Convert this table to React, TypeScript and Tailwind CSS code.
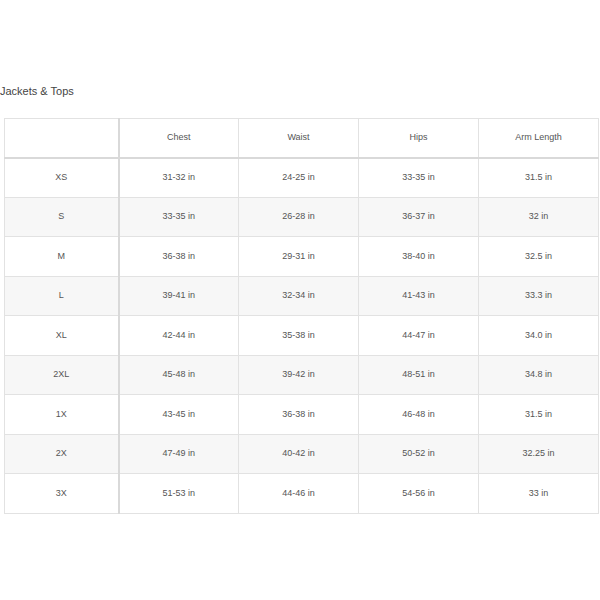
const headers = ['', 'Chest', 'Waist', 'Hips', 'Arm Length'];

const rows = [
  ['XS', '31-32 in', '24-25 in', '33-35 in', '31.5 in'],
  ['S', '33-35 in', '26-28 in', '36-37 in', '32 in'],
  ['M', '36-38 in', '29-31 in', '38-40 in', '32.5 in'],
  ['L', '39-41 in', '32-34 in', '41-43 in', '33.3 in'],
  ['XL', '42-44 in', '35-38 in', '44-47 in', '34.0 in'],
  ['2XL', '45-48 in', '39-42 in', '48-51 in', '34.8 in'],
  ['1X', '43-45 in', '36-38 in', '46-48 in', '31.5 in'],
  ['2X', '47-49 in', '40-42 in', '50-52 in', '32.25 in'],
  ['3X', '51-53 in', '44-46 in', '54-56 in', '33 in'],
];

export default function App() {
  return (
    <div className="h-[600px] w-[600px] bg-white font-['Liberation_Sans',Arial,sans-serif] text-[#555]">
      <div className="pt-[84px] text-[11px] leading-[14px] text-[#444]">Jackets &amp; Tops</div>
      <div className="mt-[20px] pl-[4px] pr-[2px]">
        <table className="w-[594px] table-fixed border-collapse text-center text-[9px]">
          <colgroup>
            <col className="w-[114px]" />
            <col className="w-[120px]" />
            <col className="w-[120px]" />
            <col className="w-[120px]" />
            <col className="w-[120px]" />
          </colgroup>
          <thead>
            <tr className="h-[39px]">
              {headers.map((h, i) => (
                <th
                  key={i}
                  className={`border border-[#e2e2e2] border-b-2 border-b-[#d9d9d9] font-normal ${
                    i === 0 ? 'border-r-2 border-r-[#d9d9d9]' : ''
                  }`}
                >
                  {h}
                </th>
              ))}
            </tr>
          </thead>
          <tbody>
            {rows.map((r, ri) => (
              <tr key={ri} className={`h-[39.5px] ${ri % 2 === 1 ? 'bg-[#f7f7f7]' : 'bg-white'}`}>
                {r.map((c, ci) => (
                  <td
                    key={ci}
                    className={`border border-[#e2e2e2] ${ci === 0 ? 'border-r-2 border-r-[#d9d9d9]' : ''}`}
                  >
                    {c}
                  </td>
                ))}
              </tr>
            ))}
          </tbody>
        </table>
      </div>
    </div>
  );
}
